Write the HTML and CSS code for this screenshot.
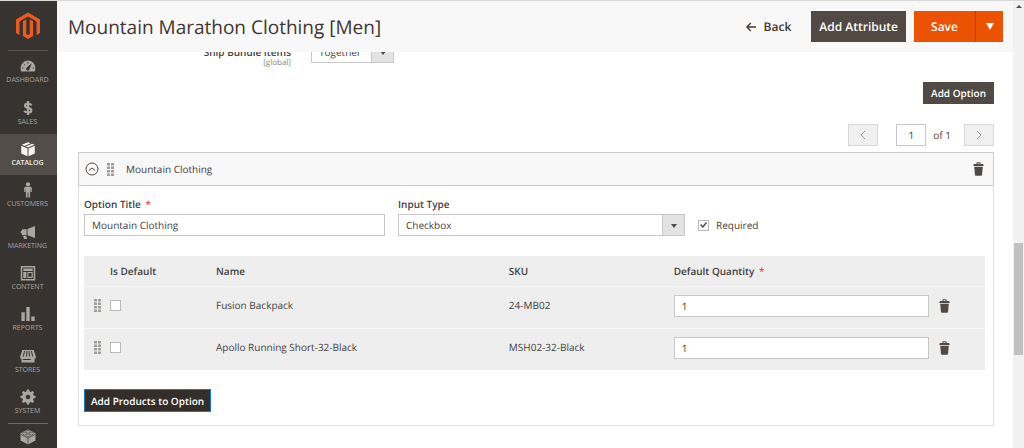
FILE: index.html
```html
<!DOCTYPE html>
<html lang="en">
<head>
<meta charset="utf-8">
<title>Mountain Marathon Clothing [Men]</title>
<link rel="stylesheet" href="styles.css">
</head>
<body>
<svg class="defs" aria-hidden="true">
  <symbol id="trash" viewBox="0 0 11 14">
    <path fill="currentColor" fill-rule="evenodd" d="M3.400 2V.9Q3.400.3 4 .3h3q.6 0 .6.6V2h2.600l.5 1.900H.3L.8 2zM4.400 2h2.200v-.8H4.400zM1.200 4.800h8.600L9 13q-.1.8-.9.8H2.900q-.8 0-.9-.8z"/>
  </symbol>
  <symbol id="drag" viewBox="0 0 7 13">
    <path fill="currentColor" d="M0 0h3v2.500H0zM4 0h3v2.500H4zM0 3.500h3v2.500H0zM4 3.500h3v2.500H4zM0 7h3v2.500H0zM4 7h3v2.500H4zM0 10.500h3V13H0zM4 10.500h3V13H4z"/>
  </symbol>
</svg>
<div class="app">
  <nav class="sidebar" aria-label="Main menu">
    <a class="logo" href="#" aria-label="Magento Admin">
      <svg viewBox="0 0 24 28" width="24" height="28"><path fill="#eb5a1e" d="M12 .5 24 7.400v13.700l-3.500 2V9.400L12 4.500 3.500 9.400v13.700l-3.500-2V7.400zM6.900 9.300l3.400-1.900v14.500l1.700 1 1.700-1V7.400l3.400 1.900v14.800L12 27.100l-5.100-3z"/></svg>
    </a>
    <ul class="menu">
      <li><a href="#"><svg viewBox="0 0 16 16"><path fill="currentColor" d="M1.200 13.500A7.400 7.400 0 0 1 .6 10a7.400 7.400 0 0 1 14.800 0q0 1.800-.6 3.500z"/><path stroke="#373330" fill="none" d="M2 10h1.400M3.800 6l1 .9M7.900 4v1.500M12.700 10H14"/><path fill="#373330" d="m11.800 5.300-2.300 6A1.700 1.700 0 1 1 6.800 9.500z"/></svg>Dashboard</a></li>
      <li><a href="#"><svg viewBox="0 0 16 16"><path fill="none" stroke="currentColor" stroke-width="2.200" d="M11.600 5.200Q10 3.700 8 3.700q-2.900 0-2.900 2 0 1.600 2.900 2.200 3.300.7 3.300 2.500 0 2.100-3.300 2.100-2.200 0-3.900-1.500M8 1v14"/></svg>Sales</a></li>
      <li><a class="active" href="#"><svg viewBox="0 0 16 16"><path fill="currentColor" d="m8 1.200 2.600 1-6 2.800-2.800-1.200zM12 2.800l2.500 1L8 6.500l-2.200-1zM1.200 4.800l6.300 2.600v7.900l-6.300-2.800zM14.800 4.800v7.700l-6.300 2.800V7.400z"/></svg>Catalog</a></li>
      <li><a href="#"><svg viewBox="0 0 16 16"><circle cx="8" cy="2.300" r="2.100" fill="currentColor"/><path fill="currentColor" d="M5.600 4.700h4.800q1.400 0 1.400 1.600V10h-1.300V7.500h-.4v8H8.400v-4.800h-.8v4.800H5.900v-8h-.4V10H4.200V6.300q0-1.600 1.400-1.600z"/></svg>Customers</a></li>
      <li><a href="#"><svg viewBox="0 0 16 16"><path fill="currentColor" d="M15 2v12L7.500 11.300V4.900zM6.600 5.200v6H2V9.600H.8V6.700H2V5.200zM3.200 12h3l.9 3H4z"/></svg>Marketing</a></li>
      <li><a href="#"><svg viewBox="0 0 16 16"><path fill="currentColor" fill-rule="evenodd" d="M.8 1h14.400v14.400H.8zM2.300 2.500v11.400h11.400V2.500zM3.300 3.500h9.400v2.400H3.300zM3.300 7h3v5.900h-3zM7.300 7h5.400v5.900H7.300zM8.400 8v3.800h3.200V8z"/></svg>Content</a></li>
      <li><a href="#"><svg viewBox="0 0 16 16"><path fill="currentColor" d="M1.400 6.300h3.400V15H1.400zM6.300 1h3.400v14H6.300zM11.300 10.500h3.400V15h-3.400z"/></svg>Reports</a></li>
      <li><a href="#"><svg viewBox="0 0 16 16"><path fill="currentColor" d="M2.300 2h11.400L16 9q0 1.600-1.500 1.900V14.500h-13v-3.600Q0 10.600 0 9z"/><path fill="none" stroke="#373330" d="M4.600 3 3.300 8.500M7 3l-.5 5.500M9 3l.5 5.500M11.400 3l1.300 5.500M2.800 11.500h8"/></svg>Stores</a></li>
      <li><a href="#"><svg viewBox="0 0 16 16"><g fill="currentColor"><path id="tooth" d="M6.200 3.500 6.900.5h2.200l.7 3v9l-.7 3H6.900l-.7-3z"/><use href="#tooth" transform="rotate(45 8 8)"/><use href="#tooth" transform="rotate(90 8 8)"/><use href="#tooth" transform="rotate(135 8 8)"/><circle cx="8" cy="8" r="5.700"/></g><circle cx="8" cy="8" r="2.300" fill="#373330"/></svg>System</a></li>
      <li class="partners"><a href="#" aria-label="Find partners and extensions"><svg viewBox="0 0 16 16"><path fill="currentColor" d="m8 .5 7.500 3.800v7.200L8 15.500l-7.500-4V4.300z"/><path fill="none" stroke="#373330" stroke-width=".7" d="M.5 5.300 8 9l7.500-3.700M8 9v6.500"/><g fill="currentColor" stroke="#373330" stroke-width=".5"><ellipse cx="8" cy="2.800" rx="2" ry="1.300"/><ellipse cx="4.500" cy="4.600" rx="2" ry="1.300"/><ellipse cx="11.500" cy="4.600" rx="2" ry="1.300"/><ellipse cx="8" cy="6.300" rx="2" ry="1.300"/></g></svg></a></li>
    </ul>
  </nav>

  <main class="page">
    <header class="topbar">
      <h1>Mountain Marathon Clothing [Men]</h1>
      <div class="actions">
        <button class="back" type="button"><svg viewBox="0 0 10 10" width="10" height="10"><path fill="none" stroke="currentColor" stroke-width="1.300" d="M10 5H1M4.800 1 .9 5l3.900 4"/></svg>Back</button>
        <button class="dark" type="button">Add Attribute</button>
        <div class="split">
          <button class="save" type="button">Save</button>
          <button class="toggle" type="button" aria-label="More save actions"><svg viewBox="0 0 8 7" width="8" height="7"><path fill="currentColor" d="M0 0h8L4 7z"/></svg></button>
        </div>
      </div>
    </header>

    <div class="content">
      <div class="ship">
        <label for="ship">Ship Bundle Items<small>[global]</small></label>
        <span class="select"><select id="ship"><option>Together</option></select></span>
      </div>

      <div class="tools"><button class="dark" type="button">Add Option</button></div>

      <div class="pager">
        <button type="button" aria-label="Previous page" disabled><svg viewBox="0 0 6 10" width="6" height="10"><path fill="none" stroke="currentColor" d="M5 1 1 5l4 4"/></svg></button>
        <label class="pages"><input class="field" type="text" value="1" aria-label="Page"><span>of 1</span></label>
        <button type="button" aria-label="Next page" disabled><svg viewBox="0 0 6 10" width="6" height="10"><path fill="none" stroke="currentColor" d="m1 1 4 4-4 4"/></svg></button>
      </div>

      <section class="option">
        <header class="option-head">
          <button class="icon" type="button" aria-label="Collapse"><svg viewBox="0 0 14 14" width="14" height="14"><g fill="none" stroke="currentColor"><circle cx="7" cy="7" r="6"/><path d="m3.800 8.500 3.200-2.500 3.200 2.500"/></g></svg></button>
          <svg class="drag" width="7" height="13"><use href="#drag"/></svg>
          <h2>Mountain Clothing</h2>
          <button class="icon" type="button" aria-label="Delete option"><svg width="11" height="14"><use href="#trash"/></svg></button>
        </header>
        <div class="option-body">
          <div class="fields">
            <div class="control title-control">
              <label for="title">Option Title <span class="star">*</span></label>
              <input class="field" id="title" type="text" value="Mountain Clothing">
            </div>
            <div class="control type-control">
              <label for="type">Input Type</label>
              <span class="select"><select id="type"><option>Checkbox</option></select></span>
            </div>
            <label class="required"><input class="check" type="checkbox" checked>Required</label>
          </div>

          <table>
            <colgroup><col class="c-drag"><col class="c-default"><col class="c-name"><col class="c-sku"><col><col class="c-remove"></colgroup>
            <thead>
              <tr><th></th><th>Is Default</th><th>Name</th><th>SKU</th><th>Default Quantity <span class="star">*</span></th><th></th></tr>
            </thead>
            <tbody>
              <tr>
                <td><svg class="drag" width="7" height="13"><use href="#drag"/></svg></td>
                <td><input class="check" type="checkbox" aria-label="Fusion Backpack is default"></td>
                <td class="text">Fusion Backpack</td>
                <td class="text">24-MB02</td>
                <td><input class="field" type="text" value="1" aria-label="Fusion Backpack quantity"></td>
                <td><button class="icon" type="button" aria-label="Delete Fusion Backpack"><svg width="11" height="14"><use href="#trash"/></svg></button></td>
              </tr>
              <tr>
                <td><svg class="drag" width="7" height="13"><use href="#drag"/></svg></td>
                <td><input class="check" type="checkbox" aria-label="Apollo Running Short is default"></td>
                <td class="text">Apollo Running Short-32-Black</td>
                <td class="text">MSH02-32-Black</td>
                <td><input class="field" type="text" value="1" aria-label="Apollo Running Short quantity"></td>
                <td><button class="icon" type="button" aria-label="Delete Apollo Running Short"><svg width="11" height="14"><use href="#trash"/></svg></button></td>
              </tr>
            </tbody>
          </table>

          <button class="dark pressed" type="button">Add Products to Option</button>
        </div>
      </section>
    </div>
  </main>

  <div class="scrollbar" aria-hidden="true"><i class="up"></i><i class="thumb"></i></div>
</div>
</body>
</html>
```
FILE: styles.css
```css
*, *::before { box-sizing: border-box; }
body {
  margin: 0;
  color: #45413e;
  background: #fff;
  font: 10px/14px "Open Sans", "Noto Sans", sans-serif;
  text-rendering: geometricPrecision;
}
.defs { position: absolute; width: 0; height: 0; }
svg { display: block; }
h1, h2, ul { margin: 0; padding: 0; font-weight: 400; }
button, input, select { margin: 0; color: inherit; font: inherit; border-radius: 0; text-rendering: inherit; }
button { padding: 0; border: 0; background: none; }

.app {
  display: flex;
  height: 100vh;
  overflow: hidden;
  border-top: 1px solid #d9d9d9;
}

/* Sidebar */
.sidebar { flex: none; width: 57px; background: #373330; overflow: hidden; }
.logo {
  display: flex;
  justify-content: center;
  margin: 0 9px 0 8px;
  padding: 11px 0 10px;
  border-bottom: 1px solid #5f574f;
}
.menu { display: grid; grid-template-rows: repeat(3, 42px 41px 41px); list-style: none; }
.menu a {
  display: flex;
  flex-direction: column;
  align-items: center;
  gap: 2px;
  height: 100%;
  padding: 7px 2px 0 0;
  color: #aaa6a0;
  font-size: 7px;
  line-height: 10px;
  text-decoration: none;
  text-transform: uppercase;
}
.menu svg { width: 16px; height: 16px; }
.menu .active { background: #524d49; color: #f7f3eb; font-weight: 600; }
.menu .partners { margin: 0 9px 0 8px; border-top: 1px solid #736963; }
.menu .partners a { padding: 5px 0 0; }

/* Header */
.page { flex: 1; min-width: 0; }
.topbar {
  position: relative;
  z-index: 1;
  display: flex;
  justify-content: space-between;
  align-items: center;
  padding: 10px 10px 10px 11px;
  background: #f8f8f8;
}
h1 { font-size: 19px; line-height: 26px; color: #41362f; }
.actions { display: flex; gap: 8px; }
.actions button { height: 31px; font-size: 12px; font-weight: 600; }
.back { display: flex; align-items: center; gap: 8px; margin-right: 12px; color: #41362f; }
.dark {
  height: 22px;
  padding: 0 8px;
  background: #514943;
  color: #fff;
  font-weight: 600;
}
.split { display: flex; background: #eb5202; color: #fff; }
.save { width: 61px; }
.toggle { display: flex; align-items: center; justify-content: center; width: 28px; border-left: 1px solid #b84002; }

/* Content, scrolled up under the header */
.content { margin-top: -11px; padding: 0 19px 22px 21px; }
.ship { display: flex; gap: 20px; }
.ship label { width: 213px; height: 22px; padding-top: 5px; text-align: right; font-weight: 600; line-height: 13px; }
.ship small { display: block; font-size: 8px; font-weight: 400; line-height: 8px; color: #888; }
.ship .select { width: 83px; }
.tools { display: flex; justify-content: flex-end; margin-top: 19px; }
.pager { display: flex; justify-content: flex-end; gap: 13px; margin: 20px 0 6px; }
.pager button {
  display: flex;
  align-items: center;
  justify-content: center;
  width: 30px;
  height: 22px;
  border: 1px solid #d8d8d8;
  background: #f0f0f0;
  color: #999;
}
.pages { display: flex; align-items: center; gap: 7px; margin-left: 5px; }
.pages .field { width: 30px; text-align: center; }

/* Controls */
.field, select {
  width: 100%;
  height: 22px;
  padding: 0 7px;
  border: 1px solid #c8c8c8;
  background: #fff;
  appearance: none;
}
.select { position: relative; display: block; height: 22px; }
.select select { display: block; padding-right: 24px; }
.select::before {
  content: "";
  position: absolute;
  inset: 0 0 0 auto;
  width: 23px;
  border: 1px solid #c8c8c8;
  background: #e3e3e3;
  pointer-events: none;
}
.select::after {
  content: "";
  position: absolute;
  top: 10px;
  right: 8px;
  border: 3px solid transparent;
  border-top: 4px solid #514943;
  border-bottom: 0;
  pointer-events: none;
}
.check {
  display: grid;
  place-items: center;
  width: 11px;
  height: 11px;
  border: 1px solid #bbb;
  background: #fff;
  appearance: none;
}
.check:checked::before {
  content: "";
  width: 7px;
  height: 6px;
  background: #514943;
  clip-path: polygon(0 50%, 15% 32%, 40% 62%, 85% 0, 100% 15%, 42% 100%);
}
.star { margin-left: 2px; color: #e04f43; }
.drag { color: #a19d99; }
.icon { display: block; color: #514943; }

/* Option card */
.option { border: 1px solid #e0e0e0; }
.option-head {
  display: flex;
  align-items: center;
  height: 34px;
  margin: -1px -1px 0;
  padding: 0 9px 0 6px;
  border: 1px solid #ccc;
  background: #f8f8f8;
}
.option-head .drag { margin: 0 12px 0 8px; }
h2 { flex: 1; font-size: 10px; line-height: 14px; }
.option-body { padding: 11px 8px 13px 5px; }
.fields { display: flex; align-items: flex-end; gap: 13px; margin-bottom: 20px; }
.control > label { display: block; margin-bottom: 3px; font-weight: 600; }
.control .field { display: block; }
.title-control { flex: 0 1 301px; }
.type-control { flex: 0 1 287px; }
.required { display: flex; align-items: center; gap: 7px; height: 22px; }

table { width: 100%; table-layout: fixed; border-collapse: collapse; background: #eee; }
th, td { padding: 0 0 0 10px; text-align: left; }
th { height: 30px; font-weight: 600; }
td { height: 42px; padding-bottom: 3px; border-top: 1px solid #f7f7f7; }
td.text { padding-bottom: 5px; }
td .field { display: block; }
.c-drag { width: 16px; }
.c-default { width: 106px; }
.c-name { width: 32.5%; }
.c-sku { width: 18.3%; }
.c-remove { width: 56px; }
.pressed { height: 23px; padding: 0 6px; margin-top: 19px; border: 1px solid #1979c3; background: #332e2a; }

/* Scroll bar */
.scrollbar { flex: none; display: flex; flex-direction: column; align-items: center; width: 11px; background: #f1f1f1; }
.up { margin-top: 4px; border: 3px solid transparent; border-top: 0; border-bottom-color: #505050; }
.thumb { width: 9px; height: 25%; margin-top: 235px; background: #c1c1c1; }
```
